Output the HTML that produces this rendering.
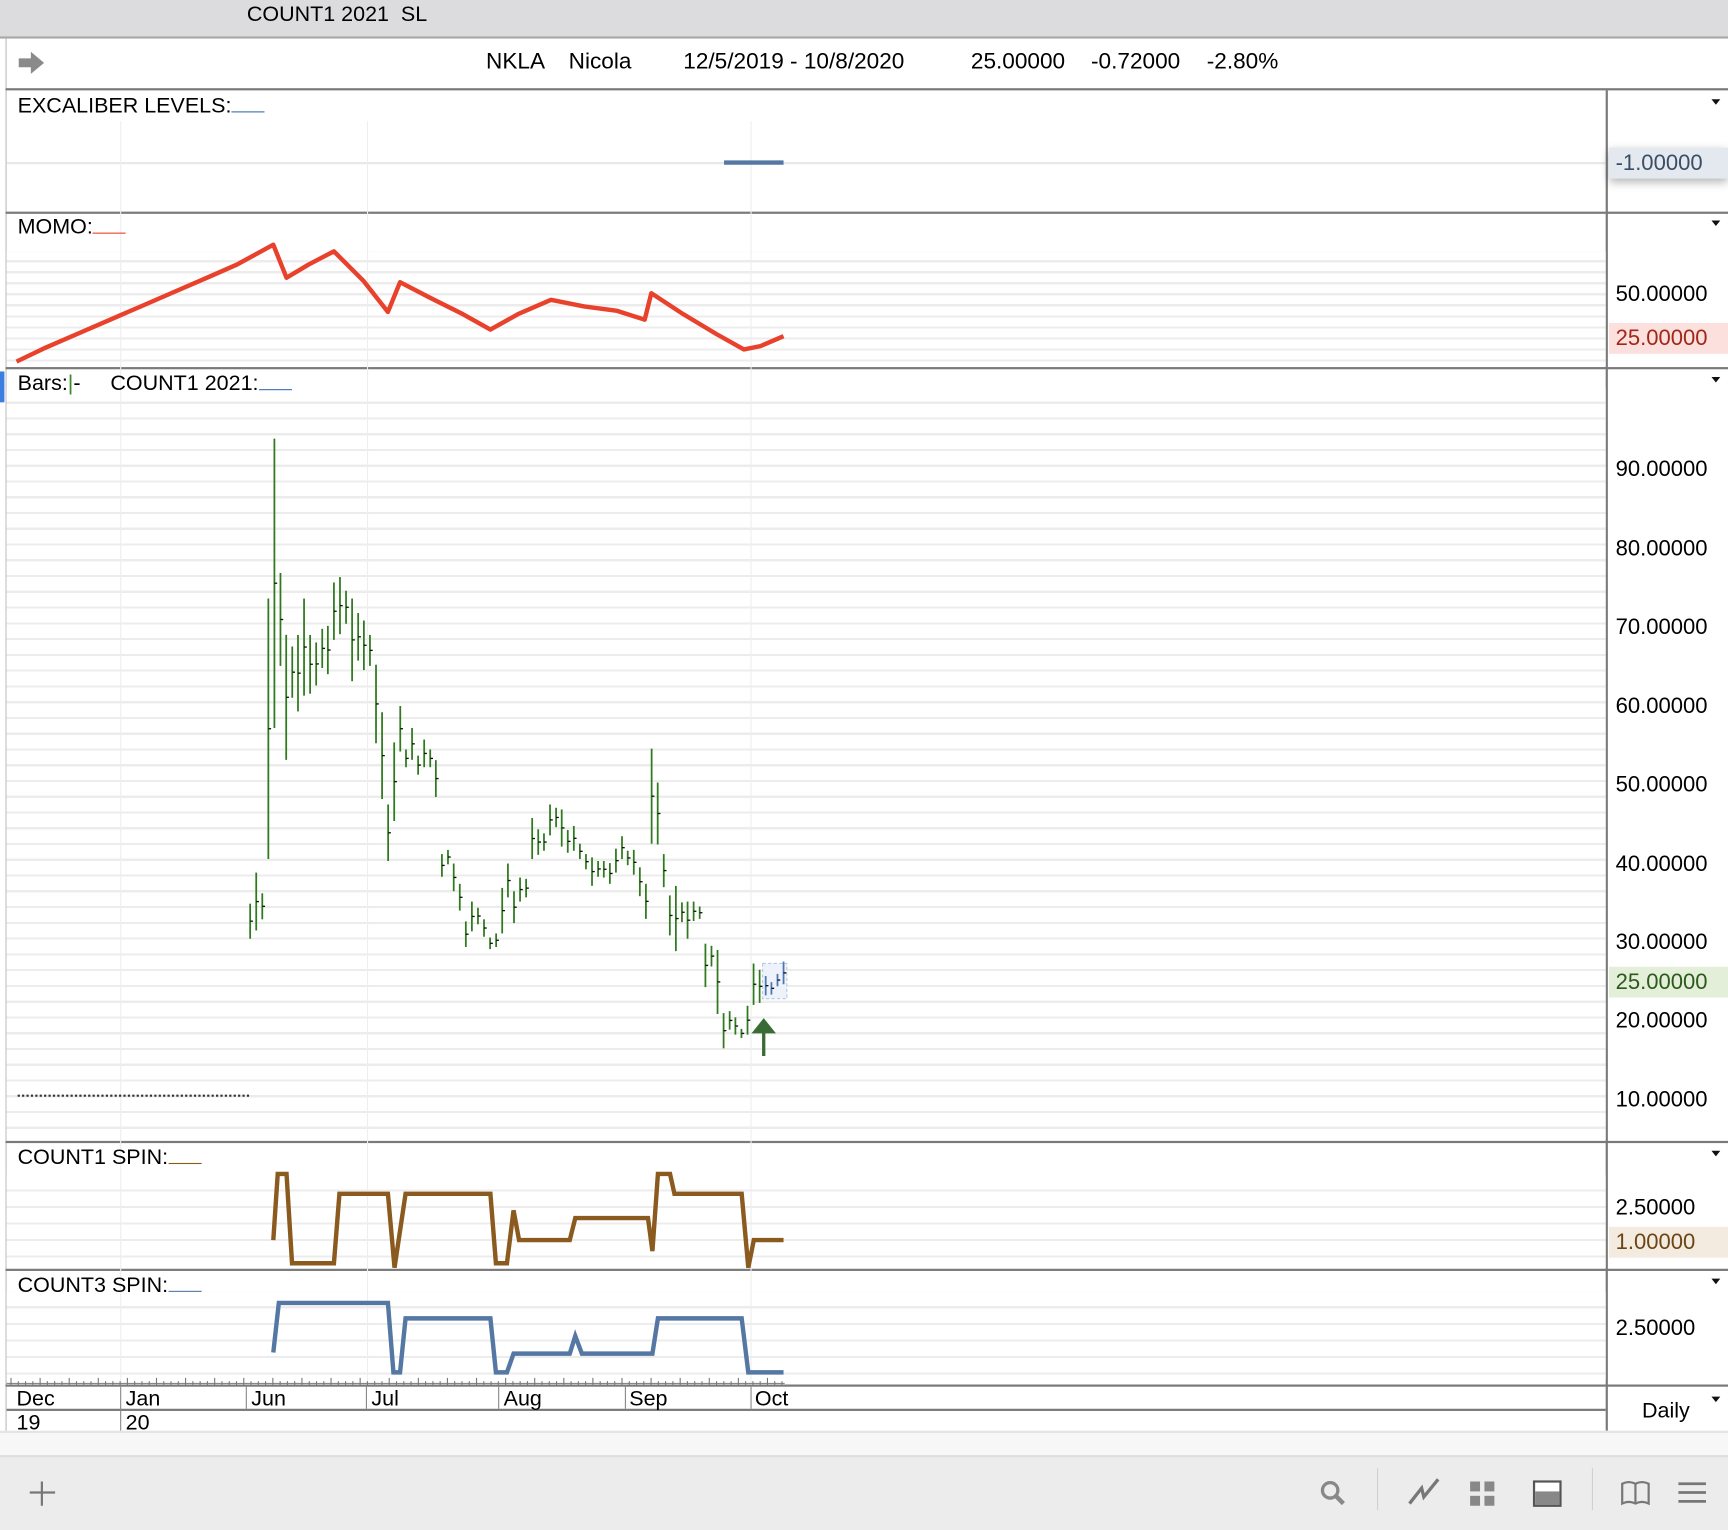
<!DOCTYPE html>
<html><head><meta charset="utf-8"><style>
html,body{margin:0;padding:0;background:#fff;overflow:hidden;width:1728px;height:1530px}
#w{position:absolute;left:0;top:0;width:1568px;height:1388px;transform:scale(1.10204,1.10231);transform-origin:0 0;font-family:"Liberation Sans",Arial,sans-serif;color:#000;background:#fff}
.a{position:absolute}
.t{position:absolute;font-size:19.5px;white-space:nowrap;line-height:1}
.hl{position:absolute;left:5px;width:1563px;height:2px;background:#7a7a7a}
.lbl{position:absolute;left:1460px;width:108px;height:28px;font-size:20px;line-height:28px;padding-left:6px;box-sizing:border-box}
.tri{position:absolute;left:1553px;width:0;height:0;border-left:4px solid transparent;border-right:4px solid transparent;border-top:5px solid #111}
.u{display:inline-block;width:30px;border-bottom:1px solid;height:16px;vertical-align:baseline}
.h{position:absolute;top:46px;font-size:20.5px;white-space:nowrap;line-height:1}
</style></head><body><div id="w">
<div class="a" style="left:0;top:0;width:1568px;height:33px;background:#dcdbdd"></div>
<div class="t" style="left:224px;top:4px;font-size:19.5px">COUNT1 2021&nbsp;&nbsp;SL</div>
<div class="a" style="left:0;top:33px;width:1568px;height:2px;background:#a8a8a8"></div>
<div class="a" style="left:5px;top:35px;width:1px;height:1265px;background:#bbb"></div>
<svg class="a" style="left:15px;top:45px" width="28" height="24"><path d="M2 8 H13 V2 L25 12 L13 22 V16 H2 Z" fill="#8a8a8a"/></svg>
<div class="h" style="left:441px">NKLA</div><div class="h" style="left:516px">Nicola</div><div class="h" style="left:620px">12/5/2019 - 10/8/2020</div><div class="h" style="left:881px">25.00000</div><div class="h" style="left:990px">-0.72000</div><div class="h" style="left:1095px">-2.80%</div>
<div class="hl" style="top:80px"></div>
<div class="hl" style="top:192px"></div>
<div class="hl" style="top:333px"></div>
<div class="hl" style="top:1035px"></div>
<div class="hl" style="top:1151px"></div>
<div class="hl" style="top:1256px"></div>
<div class="a" style="left:1457px;top:82px;width:2px;height:1216px;background:#7a7a7a"></div>
<div class="a" style="left:6px;top:228px;width:1451px;height:104px;background:repeating-linear-gradient(#fff 0,#fff 8px,#ececec 8px,#ececec 10px)"></div>
<div class="a" style="left:6px;top:352px;width:1451px;height:682px;background:repeating-linear-gradient(#fff 0,#fff 12.3px,#ececec 12.3px,#ececec 14.3px)"></div>
<div class="a" style="left:6px;top:1066px;width:1451px;height:84px;background:repeating-linear-gradient(#fff 0,#fff 13px,#ececec 13px,#ececec 15px)"></div>
<div class="a" style="left:6px;top:1172px;width:1451px;height:80px;background:repeating-linear-gradient(#fff 0,#fff 13px,#ececec 13px,#ececec 15px)"></div>
<div class="a" style="left:6px;top:147px;width:1451px;height:2px;background:#e8e8e8"></div>
<div class="a" style="left:109px;top:110px;width:1px;height:1145px;background:#eee"></div>
<div class="a" style="left:333px;top:110px;width:1px;height:1145px;background:#eee"></div>
<div class="a" style="left:681px;top:110px;width:1px;height:1145px;background:#eee"></div>
<div class="a" style="left:0;top:337px;width:4px;height:28px;background:#3b7de0"></div>
<div class="t" style="left:16px;top:85px">EXCALIBER LEVELS:<span class="u" style="border-color:#3b6fb0"></span></div>
<div class="t" style="left:16px;top:195px">MOMO:<span class="u" style="border-color:#e8412c"></span></div>
<div class="t" style="left:16px;top:337px">Bars:<span style="color:#3a8a2a">|</span>-&nbsp;&nbsp;&nbsp;&nbsp;&nbsp;COUNT1 2021:<span class="u" style="border-color:#3b6fb0"></span></div>
<div class="t" style="left:16px;top:1039px">COUNT1 SPIN:<span class="u" style="border-color:#8b5a1e"></span></div>
<div class="t" style="left:16px;top:1155px">COUNT3 SPIN:<span class="u" style="border-color:#5577a3"></span></div>
<div class="tri" style="top:90px"></div><div class="tri" style="top:200px"></div><div class="tri" style="top:342px"></div><div class="tri" style="top:1044px"></div><div class="tri" style="top:1160px"></div><div class="tri" style="top:1267px"></div>
<div class="lbl" style="top:134px;background:#e4e9f0;color:#3c4d66;box-shadow:0 3px 8px rgba(0,0,0,.3)">-1.00000</div>
<div class="lbl" style="top:253px">50.00000</div>
<div class="lbl" style="top:293px;background:#fbe0dd;color:#a0281a">25.00000</div>
<div class="lbl" style="top:412px">90.00000</div>
<div class="lbl" style="top:484px">80.00000</div>
<div class="lbl" style="top:555px">70.00000</div>
<div class="lbl" style="top:627px">60.00000</div>
<div class="lbl" style="top:698px">50.00000</div>
<div class="lbl" style="top:770px">40.00000</div>
<div class="lbl" style="top:841px">30.00000</div>
<div class="lbl" style="top:877px;background:#e3efd9;color:#2c5a1c">25.00000</div>
<div class="lbl" style="top:912px">20.00000</div>
<div class="lbl" style="top:984px">10.00000</div>
<div class="lbl" style="top:1082px">2.50000</div>
<div class="lbl" style="top:1113px;background:#f3ebe0;color:#6b4614">1.00000</div>
<div class="lbl" style="top:1191px">2.50000</div>
<div class="a" style="left:16px;top:993px;width:210px;border-top:2px dotted #333"></div>
<svg class="a" style="left:0;top:0" width="1568" height="1388">
<line x1="657" y1="147.5" x2="711" y2="147.5" stroke="#5577a3" stroke-width="4"/>
<polyline fill="none" stroke="#e8412c" stroke-width="4" stroke-linejoin="round" points="15,328 40,316 70,303 100,290 130,277 160,264 190,251 215,240 248,222 260,252 280,240 303,228 330,255 352,283 363,256 390,270 420,285 445,299 470,285 500,272 530,278 560,282 585,290 591,266 620,285 650,303 675,317 690,314 711,305"/>
<polyline fill="none" stroke="#8b5a1e" stroke-width="4" points="248,1125 252,1065 260,1065 265,1146 303,1146 308,1083 352,1083 358,1150 368,1083 445,1083 450,1146 460,1146 466,1098 471,1125 517,1125 522,1105 588,1105 592,1135 597,1065 608,1065 612,1083 673,1083 679,1150 684,1125 711,1125"/>
<polyline fill="none" stroke="#5577a3" stroke-width="4" points="248,1227 253,1182 352,1182 357,1245 363,1245 368,1196 445,1196 450,1245 460,1245 466,1228 517,1228 522,1212 528,1228 592,1228 597,1196 673,1196 679,1245 711,1245"/>
<rect x="692" y="874" width="22" height="32" fill="#eef2fa" stroke="#b8c8e0" stroke-dasharray="3,2"/>
<g id="bars"></g>
<path d="M693 958 V934 M685 936 L693 926 L701 936 Z" stroke="#3b6b34" stroke-width="3" fill="#3b6b34"/>
<g id="ticks"></g>
</svg>
<div class="a" style="left:6px;top:1278px;width:1451px;height:2px;background:#7a7a7a"></div>
<div class="t" style="left:15px;top:1260px">Dec</div><div class="t" style="left:114px;top:1260px">Jan</div><div class="t" style="left:228px;top:1260px">Jun</div><div class="t" style="left:337px;top:1260px">Jul</div><div class="t" style="left:457px;top:1260px">Aug</div><div class="t" style="left:571px;top:1260px">Sep</div><div class="t" style="left:685px;top:1260px">Oct</div>
<div class="t" style="left:15px;top:1282px">19</div><div class="t" style="left:114px;top:1282px">20</div>
<div class="t" style="left:1490px;top:1271px">Daily</div>
<div class="a" style="left:109px;top:1258px;width:1px;height:40px;background:#888"></div>
<div class="a" style="left:223px;top:1258px;width:1px;height:20px;background:#888"></div>
<div class="a" style="left:332px;top:1258px;width:1px;height:20px;background:#888"></div>
<div class="a" style="left:452px;top:1258px;width:1px;height:20px;background:#888"></div>
<div class="a" style="left:567px;top:1258px;width:1px;height:20px;background:#888"></div>
<div class="a" style="left:681px;top:1258px;width:1px;height:20px;background:#888"></div>
<div class="a" style="left:0;top:1298px;width:1568px;height:22px;background:#f7f7f7;border-top:2px solid #e4e4e4;box-sizing:border-box"></div>
<div class="a" style="left:0;top:1320px;width:1568px;height:68px;background:#ececec;border-top:2px solid #dedede;box-sizing:border-box"></div>
<svg class="a" style="left:0;top:1320px" width="1568" height="68">
<path d="M38 24 V46 M27 34 H50" stroke="#777" stroke-width="2"/>
<circle cx="1207" cy="32" r="7" fill="none" stroke="#888" stroke-width="3"/><path d="M1212 37 L1219 44" stroke="#888" stroke-width="4"/>
<path d="M1250 12 V50 M1445 12 V50" stroke="#d0d0d0" stroke-width="1"/>
<path d="M1279 44 L1290 30 L1292 38 L1305 22" fill="none" stroke="#777" stroke-width="3"/>
<rect x="1334" y="24" width="9" height="9" fill="#888"/><rect x="1347" y="24" width="9" height="9" fill="#888"/><rect x="1334" y="37" width="9" height="9" fill="#888"/><rect x="1347" y="37" width="9" height="9" fill="#888"/>
<rect x="1392" y="24" width="24" height="22" fill="#fff" stroke="#555" stroke-width="2"/><rect x="1393" y="33" width="22" height="12" fill="#888"/>
<path d="M1472 26 Q1478 23 1484 26 Q1490 23 1496 26 V44 Q1490 41 1484 44 Q1478 41 1472 44 Z M1484 26 V44" fill="none" stroke="#777" stroke-width="2"/>
<path d="M1523 26 H1548 M1523 34 H1548 M1523 42 H1548" stroke="#777" stroke-width="2.5"/>
</svg>
</div>
<script>
var B=[[30,1170,1255],[47,1095,1235],[64,1145,1208],[81,432,1062],[98,45,745],[115,370,595],[131,520,822],[148,548,672],[164,520,705],[181,432,667],[198,520,662],[215,538,642],[232,505,600],[248,498,615],[265,393,532],[282,380,518],[299,413,493],[316,432,632],[333,467,582],[349,485,605],[366,520,595],[383,592,782],[400,707,917],[417,930,1067],[434,780,970],[451,692,802],[467,797,840],[484,745,822],[501,812,858],[518,773,840],[535,797,840],[551,823,912],[568,1050,1105],[585,1040,1075],[601,1073,1140],[618,1122,1187],[635,1213,1275],[652,1165,1237],[669,1180,1220],[686,1208,1250],[703,1252,1280],[720,1242,1275],[737,1132,1242],[753,1073,1155],[770,1140,1217],[787,1107,1165],[804,1110,1155],[821,963,1062],[838,990,1052],[854,1000,1042],[871,930,1005],[888,938,985],[904,942,1032],[921,992,1047],[938,982,1042],[955,1025,1062],[972,1050,1087],[989,1058,1127],[1006,1067,1105],[1022,1067,1107],[1039,1072,1122],[1056,1037,1095],[1073,1007,1062],[1089,1042,1077],[1106,1040,1100],[1123,1082,1152],[1140,1122,1207],[1156,795,1025],[1173,877,1027],[1190,1050,1130],[1207,1150,1247],[1224,1127,1285],[1241,1167,1215],[1257,1165,1255],[1274,1165,1212],[1291,1177,1207],[1307,1267,1372],[1324,1272,1322],[1341,1282,1437],[1358,1435,1520],[1375,1430,1475],[1391,1445,1487],[1408,1473,1495],[1425,1417,1487],[1442,1315,1415],[1459,1330,1410],[1476,1345,1392,1],[1492,1360,1390,1],[1509,1340,1370,1],[1526,1310,1365,1]];
var s='',k=0.3235,ky=0.375;
B.forEach(function(b){var x=(217.3+b[0]*k).toFixed(1),y1=(381+b[1]*ky).toFixed(1),y2=(381+b[2]*ky).toFixed(1),c=b[3]?'#4a78b0':'#2f7a1e',m=((+y1+ +y2)/2).toFixed(1);
s+='<line x1="'+x+'" y1="'+y1+'" x2="'+x+'" y2="'+y2+'" stroke="'+c+'" stroke-width="1.6"/><line x1="'+x+'" y1="'+m+'" x2="'+(+x+2.5)+'" y2="'+m+'" stroke="#111" stroke-width="1.2"/>';});
document.getElementById('bars').innerHTML=s;
var t='<line x1="6" y1="1255" x2="712" y2="1255" stroke="#888" stroke-width="1"/>';
for(var x=10;x<712;x+=6.6){t+='<line x1="'+x.toFixed(1)+'" y1="'+(Math.round((x-10)/6.6)%4==0?1250:1253)+'" x2="'+x.toFixed(1)+'" y2="1256" stroke="#777" stroke-width="1"/>';}
document.getElementById('ticks').innerHTML=t;
</script>
</body></html>
